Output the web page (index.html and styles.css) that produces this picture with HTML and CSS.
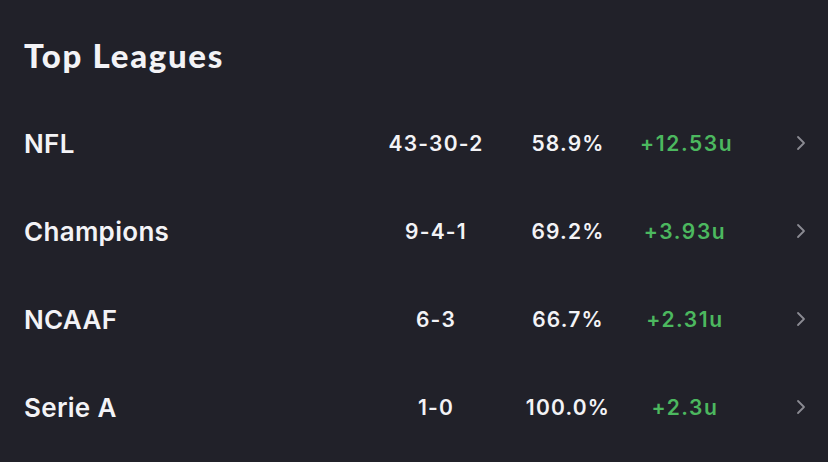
FILE: index.html
```html
<!DOCTYPE html>
<html>
<head>
<meta charset="utf-8">
<link rel="stylesheet" href="styles.css">
</head>
<body>
<main class="panel">
  <h1 class="title">Top Leagues</h1>
  <div class="rows">
    <div class="row">
      <span class="name">NFL</span>
      <span class="rec">43-30-2</span>
      <span class="pct">58.9%</span>
      <span class="units">+12.53u</span>
      <svg class="chev" width="10" height="16" viewBox="0 0 10 16"><polyline points="2,2 8,8 2,14" fill="none" stroke="currentColor" stroke-width="1.8" stroke-linecap="round" stroke-linejoin="round"/></svg>
    </div>
    <div class="row">
      <span class="name">Champions</span>
      <span class="rec">9-4-1</span>
      <span class="pct">69.2%</span>
      <span class="units">+3.93u</span>
      <svg class="chev" width="10" height="16" viewBox="0 0 10 16"><polyline points="2,2 8,8 2,14" fill="none" stroke="currentColor" stroke-width="1.8" stroke-linecap="round" stroke-linejoin="round"/></svg>
    </div>
    <div class="row">
      <span class="name">NCAAF</span>
      <span class="rec">6-3</span>
      <span class="pct">66.7%</span>
      <span class="units">+2.31u</span>
      <svg class="chev" width="10" height="16" viewBox="0 0 10 16"><polyline points="2,2 8,8 2,14" fill="none" stroke="currentColor" stroke-width="1.8" stroke-linecap="round" stroke-linejoin="round"/></svg>
    </div>
    <div class="row">
      <span class="name">Serie A</span>
      <span class="rec">1-0</span>
      <span class="pct">100.0%</span>
      <span class="units">+2.3u</span>
      <svg class="chev" width="10" height="16" viewBox="0 0 10 16"><polyline points="2,2 8,8 2,14" fill="none" stroke="currentColor" stroke-width="1.8" stroke-linecap="round" stroke-linejoin="round"/></svg>
    </div>
  </div>
</main>
</body>
</html>
```

FILE: styles.css
```css
html, body {
  margin: 0;
  padding: 0;
  background: #212129;
}
.panel {
  width: 828px;
  height: 462px;
  box-sizing: border-box;
  padding: 35px 22px 0 24px;
  color: #f3f3f6;
  font-family: Inter, "Liberation Sans", sans-serif;
  overflow: hidden;
}
.title {
  margin: 0 0 24px 0;
  height: 40px;
  line-height: 40px;
  font-family: Lato, sans-serif;
  font-weight: 900;
  font-size: 33px;
  letter-spacing: 1.7px;
}
.rows {
  display: flex;
  flex-direction: column;
}
.row {
  display: grid;
  grid-template-columns: 352px 120px 144px 90px 1fr;
  align-items: center;
  height: 88px;
}
.name {
  font-size: 26px;
  font-weight: 600;
  letter-spacing: 0.3px;
}
.rec, .pct, .units {
  text-align: center;
  font-size: 21px;
  font-weight: 600;
  letter-spacing: 1.2px;
}
.units {
  color: #4cb85f;
  letter-spacing: 1.6px;
}
.chev {
  justify-self: end;
  color: #8b8b92;
  margin-right: 0;
}
```
